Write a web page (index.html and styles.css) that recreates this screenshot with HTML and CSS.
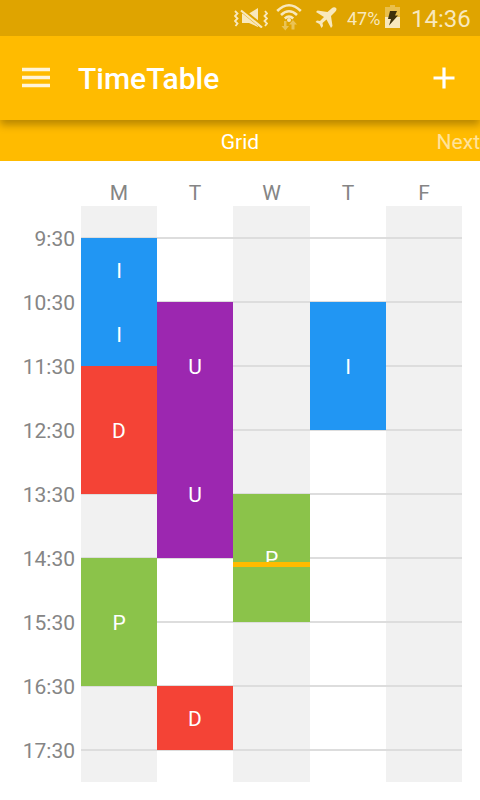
FILE: index.html
```html
<!DOCTYPE html>
<html lang="en">
<head>
    <meta charset="UTF-8">
    <meta name="viewport" content="width=device-width, initial-scale=1.0">
    <title>TimeTable</title>
    <link rel="stylesheet" href="styles.css">
</head>
<body>
    <div class="status-bar">
        <svg class="mute-icon" width="34" height="20" viewBox="0 0 34 20">
            <g fill="none" stroke="currentColor" stroke-width="1.8">
                <path d="M1 3l2.500 2.500L1 8l2.500 2.500L1 13l2.500 2.500L1.500 18"/>
                <path d="M31 3l2 2.500L30.500 8l2.500 2.500-2.500 2.500 2.500 2.500-2 2.500"/>
            </g>
            <path d="M8 5.500h7L24 0v19l-9-4H8z" fill="currentColor"/>
            <path d="M6 0.500l22 18" stroke="#dfa400" stroke-width="4.500"/>
            <path d="M7 2.500l21 17" stroke="currentColor" stroke-width="2.200"/>
        </svg>
        <svg class="wifi-icon" width="26" height="28" viewBox="0 0 26 28">
            <g fill="none" stroke="currentColor" stroke-width="2.600">
                <path d="M1.200 8Q13-3.500 24.800 8"/>
                <path d="M5 12Q13 4.500 21 12"/>
                <path d="M8.800 15.500Q13 11.500 17.200 15.500"/>
            </g>
            <circle cx="13" cy="17" r="2" fill="currentColor"/>
            <path d="M8 18h2.500v5H13l-3.700 4.500L5.500 23H8zM15.500 26.500v-5H13l4-4.500 4 4.500h-2.500v5z" fill="currentColor" opacity="0.45"/>
        </svg>
        <svg class="plane-icon" width="22" height="22" viewBox="0 0 22 22">
            <path d="M21 1c1 1 .5 2.500-1 4l-4 4 1.500 10-1.500 2-4.500-8.500L7.500 16l.5 3-1.500 2-2-4-4-2L2 13.500l3 .5 4-4L1 5l1.500-1.500L12.500 5l4-3.500C18 .2 20 0 21 1z" fill="currentColor"/>
        </svg>
        <span class="battery-level">47%</span>
        <svg class="battery-icon" width="15" height="23" viewBox="0 0 15 23">
            <path d="M0 2h5V0h5v2h5v21H0z" fill="currentColor" opacity="0.4"/>
            <path d="M0 12h15v11H0z" fill="currentColor"/>
            <path d="M5 6h7l-2 4.500h3L4 20.500 6 14H3z" fill="#3e310b"/>
        </svg>
        <span class="clock">14:36</span>
    </div>

    <div class="toolbar">
        <svg class="menu-icon" width="28" height="21" viewBox="0 0 28 21">
            <path d="M0 2.500h28M0 10.500h28M0 18.500h28" stroke="currentColor" stroke-width="3.500"/>
        </svg>
        <h1>TimeTable</h1>
        <svg class="add-icon" width="22" height="22" viewBox="0 0 22 22">
            <path d="M0.500 11h21M11 0.500v21" stroke="currentColor" stroke-width="3.200"/>
        </svg>
    </div>

    <div class="tabs">
        <span class="tab active">Grid</span>
        <span class="tab next">Next</span>
    </div>

    <div class="timetable">
        <div class="day mon">M</div>
        <div class="day tue">T</div>
        <div class="day wed">W</div>
        <div class="day thu">T</div>
        <div class="day fri">F</div>

        <div class="column mon"></div>
        <div class="column wed"></div>
        <div class="column fri"></div>

        <div class="time t0930">9:30</div>
        <div class="time t1030">10:30</div>
        <div class="time t1130">11:30</div>
        <div class="time t1230">12:30</div>
        <div class="time t1330">13:30</div>
        <div class="time t1430">14:30</div>
        <div class="time t1530">15:30</div>
        <div class="time t1630">16:30</div>
        <div class="time t1730">17:30</div>

        <div class="line t0930"></div>
        <div class="line t1030"></div>
        <div class="line t1130"></div>
        <div class="line t1230"></div>
        <div class="line t1330"></div>
        <div class="line t1430"></div>
        <div class="line t1530"></div>
        <div class="line t1630"></div>
        <div class="line t1730"></div>

        <div class="lesson blue mon t0930 one-hour">I</div>
        <div class="lesson blue mon t1030 one-hour">I</div>
        <div class="lesson red mon t1130 two-hours">D</div>
        <div class="lesson green mon t1430 two-hours">P</div>
        <div class="lesson purple tue t1030 two-hours">U</div>
        <div class="lesson purple tue t1230 two-hours">U</div>
        <div class="lesson red tue t1630 one-hour">D</div>
        <div class="lesson green wed t1330 two-hours">P</div>
        <div class="lesson blue thu t1030 two-hours">I</div>

        <div class="now wed t1430"></div>
    </div>
</body>
</html>
```
FILE: styles.css
```css
body {
    margin: 0;
    height: 800px;
    overflow: hidden;
    font-family: Roboto, sans-serif;
    font-size: 21px;
    background: white;
    color: #858585;
}

svg {
    display: block;
    flex: none;
}

.status-bar {
    height: 36px;
    box-sizing: border-box;
    padding-right: 12px;
    display: flex;
    justify-content: flex-end;
    align-items: flex-start;
    background: #dfa400;
    color: #f8e8bd;
}

.mute-icon {
    margin: 8px 8px 0 0;
}

.wifi-icon {
    margin: 3px 13px 0 0;
}

.plane-icon {
    margin: 7px 10px 0 0;
}

.battery-level {
    width: 38px;
    font-size: 18px;
    line-height: 38px;
}

.battery-icon {
    margin-top: 5px;
}

.clock {
    width: 57px;
    margin-left: 11px;
    font-size: 24px;
    line-height: 38px;
}

.toolbar {
    position: relative;
    height: 84px;
    box-sizing: border-box;
    padding: 0 25px 0 22px;
    display: flex;
    align-items: center;
    background: #ffbb00;
    color: white;
    box-shadow: 0 5px 8px rgba(0, 0, 0, 0.28);
    /* keep the shadow off the status bar */
    clip-path: inset(0 0 -16px 0);
}

.toolbar h1 {
    flex: 1;
    margin: 0 0 0 28px;
    font-size: 30px;
    font-weight: 500;
}

.menu-icon {
    margin-top: -1px;
    opacity: 0.85;
}

.tabs {
    height: 41px;
    display: grid;
    grid-template-columns: 1fr auto 1fr;
    align-items: start;
    background: #ffbb00;
    color: white;
    line-height: 45px;
}

.tab.active {
    grid-column: 2;
}

.tab.next {
    justify-self: end;
    opacity: 0.6;
}

/* one row per half hour, starting at 9:00 */
.timetable {
    display: grid;
    grid-template-columns: 81px 76px 76px 77px 76px 76px;
    grid-template-rows: 45px repeat(18, 32px);
}

.mon { grid-column: 2; }
.tue { grid-column: 3; }
.wed { grid-column: 4; }
.thu { grid-column: 5; }
.fri { grid-column: 6; }

.t0930 { grid-row-start: 3; }
.t1030 { grid-row-start: 5; }
.t1130 { grid-row-start: 7; }
.t1230 { grid-row-start: 9; }
.t1330 { grid-row-start: 11; }
.t1430 { grid-row-start: 13; }
.t1530 { grid-row-start: 15; }
.t1630 { grid-row-start: 17; }
.t1730 { grid-row-start: 19; }

.one-hour { grid-row-end: span 2; }
.two-hours { grid-row-end: span 4; }

.day {
    grid-row: 1;
    padding-top: 19px;
    line-height: 26px;
    text-align: center;
}

.column {
    grid-row: 2 / -1;
    background: #f1f1f1;
}

.time {
    grid-column: 1;
    height: 26px;
    margin-top: -12px;
    padding-right: 6px;
    line-height: 26px;
    text-align: right;
}

.line {
    grid-column: 2 / -1;
    height: 2px;
    margin-top: -1px;
    background: #dddddd;
}

.lesson {
    display: flex;
    justify-content: center;
    align-items: center;
    padding-top: 2px;
    color: white;
}

.blue { background: #2196f3; }
.red { background: #f44336; }
.green { background: #8bc34a; }
.purple { background: #9c27b0; }

.now {
    height: 5px;
    margin-top: 4px;
    background: #ffbb00;
}
```
